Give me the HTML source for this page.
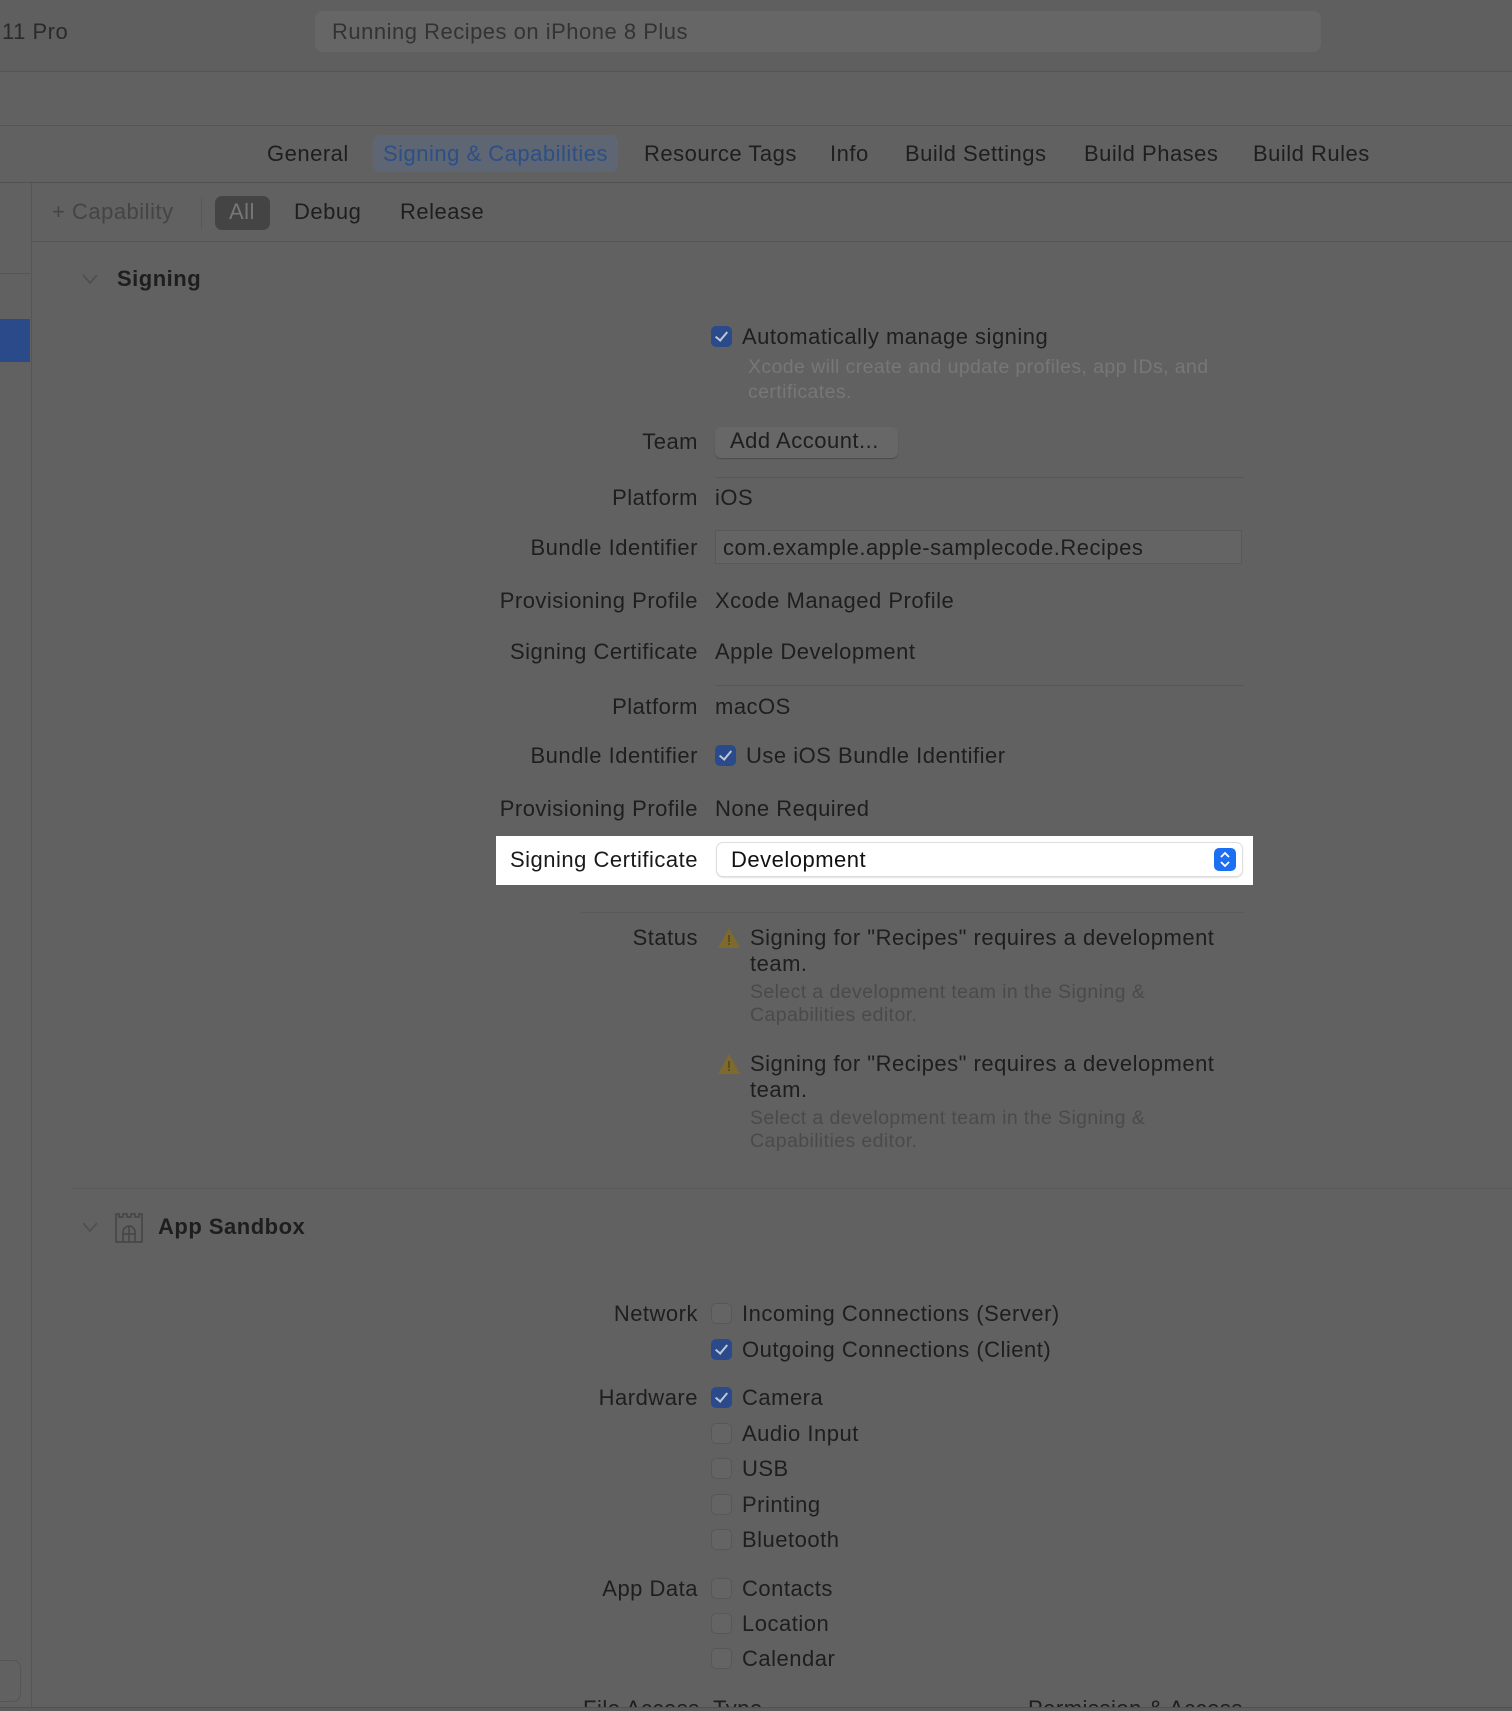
<!DOCTYPE html>
<html style="overflow:hidden"><head><meta charset="utf-8"><style>
body{margin:0;width:1512px;height:1711px;background:#616161;font-family:"Liberation Sans",sans-serif;color:#1e1e1e;position:relative;overflow:hidden}
.t{position:absolute;font-size:22px;letter-spacing:0.5px;line-height:26px;white-space:nowrap}
.l{position:absolute;right:814px;font-size:22px;letter-spacing:0.5px;line-height:26px;white-space:nowrap;text-align:right}
.hl{position:absolute;height:1px;background:#555}
.cb{position:absolute;left:711px;width:21px;height:21px;border-radius:5px;border:1px solid #575757;background:#646464;box-sizing:border-box}
.cb.on{background:#2b4a8c;border-color:#2b4a8c}
.cb.on:after{content:"";position:absolute;left:6px;top:2px;width:5px;height:10px;border:solid #bfc6d4;border-width:0 2.5px 2.5px 0;transform:rotate(40deg)}
.sub{position:absolute;font-size:19.5px;letter-spacing:0.4px;line-height:23px;color:#4a4a4a;white-space:nowrap}
</style></head><body>
<div style="position:absolute;left:0;top:0;width:1512px;height:71px;background:#5f5f5f;border-bottom:1px solid #555"></div>
<div class="t" style="left:2px;top:19px;color:#2a2a2a">11 Pro</div>
<div style="position:absolute;left:315px;top:11px;width:1006px;height:41px;border-radius:8px;background:#666"></div>
<div class="t" style="left:332px;top:19px;color:#333">Running Recipes on iPhone 8 Plus</div>
<div class="hl" style="left:0;top:125px;width:1512px"></div>
<div style="position:absolute;left:373px;top:135px;width:245px;height:37px;border-radius:7px;background:#5d6672"></div>
<div class="t" style="left:267px;top:141px">General</div>
<div class="t" style="left:383px;top:141px;color:#2d4f86">Signing &amp; Capabilities</div>
<div class="t" style="left:644px;top:141px">Resource Tags</div>
<div class="t" style="left:830px;top:141px">Info</div>
<div class="t" style="left:905px;top:141px">Build Settings</div>
<div class="t" style="left:1084px;top:141px">Build Phases</div>
<div class="t" style="left:1253px;top:141px">Build Rules</div>
<div class="hl" style="left:0;top:182px;width:1512px;background:#505050"></div>
<div style="position:absolute;left:31px;top:183px;width:1px;height:1528px;background:#555"></div>
<div style="position:absolute;left:0;top:319px;width:30px;height:43px;background:#2b4a8a"></div>
<div style="position:absolute;left:0;top:273px;width:30px;height:1px;background:#555"></div>
<div class="t" style="left:52px;top:199px;color:#444">+ Capability</div>
<div style="position:absolute;left:201px;top:198px;width:1px;height:32px;background:#585858"></div>
<div style="position:absolute;left:215px;top:196px;width:55px;height:34px;border-radius:7px;background:#444"></div>
<div class="t" style="left:229px;top:199px;color:#777">All</div>
<div class="t" style="left:294px;top:199px">Debug</div>
<div class="t" style="left:400px;top:199px">Release</div>
<div class="hl" style="left:32px;top:241px;width:1480px;background:#555"></div>
<svg style="position:absolute;left:81px;top:273px" width="18" height="12" fill="none" stroke="#505050" stroke-width="1.8"><path d="M2 2l7 8 7-8"/></svg>
<div class="t" style="left:117px;top:266px;font-weight:bold">Signing</div>

<div class="cb on" style="top:326px"></div>
<div class="t" style="left:742px;top:324px">Automatically manage signing</div>
<div class="sub" style="left:748px;top:356px;color:#777">Xcode will create and update profiles, app IDs, and</div>
<div class="sub" style="left:748px;top:381px;color:#777">certificates.</div>
<div class="l" style="top:429px">Team</div>
<div style="position:absolute;left:715px;top:427px;width:183px;height:31px;border-radius:6px;background:#676767;box-shadow:0 1px 1px #4a4a4a"></div>
<div class="t" style="left:730px;top:428px">Add Account...</div>
<div class="hl" style="left:715px;top:477px;width:529px;background:#575757"></div>
<div class="l" style="top:485px">Platform</div><div class="t" style="left:715px;top:485px">iOS</div>
<div class="l" style="top:535px">Bundle Identifier</div>
<div style="position:absolute;left:715px;top:530px;width:527px;height:34px;background:#646464;border:1px solid #585858;box-sizing:border-box"></div>
<div class="t" style="left:723px;top:535px">com.example.apple-samplecode.Recipes</div>
<div class="l" style="top:588px">Provisioning Profile</div><div class="t" style="left:715px;top:588px">Xcode Managed Profile</div>
<div class="l" style="top:639px">Signing Certificate</div><div class="t" style="left:715px;top:639px">Apple Development</div>
<div class="hl" style="left:715px;top:685px;width:529px;background:#575757"></div>
<div class="l" style="top:694px">Platform</div><div class="t" style="left:715px;top:694px">macOS</div>
<div class="l" style="top:743px">Bundle Identifier</div>
<div class="cb on" style="left:715px;top:745px"></div>
<div class="t" style="left:746px;top:743px">Use iOS Bundle Identifier</div>
<div class="l" style="top:796px">Provisioning Profile</div><div class="t" style="left:715px;top:796px">None Required</div>

<div style="position:absolute;left:496px;top:836px;width:757px;height:49px;background:#fff"></div>
<div class="l" style="top:847px;color:#1a1a1a">Signing Certificate</div>
<div style="position:absolute;left:717px;top:843px;width:525px;height:33px;border-radius:6px;background:#fff;box-shadow:0 0 0 1px #ddd,0 1px 2px #bbb"></div>
<div class="t" style="left:731px;top:847px;color:#111">Development</div>
<div style="position:absolute;left:1214px;top:848px;width:22px;height:23px;border-radius:5px;background:#1c6ef2"></div>
<svg style="position:absolute;left:1214px;top:848px" width="22" height="23" fill="none" stroke="#fff" stroke-width="1.8"><path d="M7 9l4-4 4 4M7 14l4 4 4-4"/></svg>

<div class="hl" style="left:581px;top:912px;width:663px;background:#5a5a5a"></div>
<div class="l" style="top:925px">Status</div>
<svg style="position:absolute;left:717px;top:927px" width="24" height="22"><path d="M12 1L23 21H1Z" fill="#7d6a2c"/><rect x="11" y="8" width="2" height="7" fill="#5a4d22"/><rect x="11" y="16" width="2" height="2" fill="#5a4d22"/></svg>
<div class="t" style="left:750px;top:925px">Signing for "Recipes" requires a development</div>
<div class="t" style="left:750px;top:951px">team.</div>
<div class="sub" style="left:750px;top:981px">Select a development team in the Signing &amp;</div>
<div class="sub" style="left:750px;top:1004px">Capabilities editor.</div>
<svg style="position:absolute;left:717px;top:1053px" width="24" height="22"><path d="M12 1L23 21H1Z" fill="#7d6a2c"/><rect x="11" y="8" width="2" height="7" fill="#5a4d22"/><rect x="11" y="16" width="2" height="2" fill="#5a4d22"/></svg>
<div class="t" style="left:750px;top:1051px">Signing for "Recipes" requires a development</div>
<div class="t" style="left:750px;top:1077px">team.</div>
<div class="sub" style="left:750px;top:1107px">Select a development team in the Signing &amp;</div>
<div class="sub" style="left:750px;top:1130px">Capabilities editor.</div>
<div class="hl" style="left:71px;top:1188px;width:1441px;background:#5a5a5a"></div>

<svg style="position:absolute;left:81px;top:1221px" width="18" height="12" fill="none" stroke="#505050" stroke-width="1.8"><path d="M2 2l7 8 7-8"/></svg>
<svg style="position:absolute;left:114px;top:1212px" width="30" height="32" fill="none" stroke="#444" stroke-width="1.5"><path d="M2 30V2h3v3h4V2h4v3h4V2h4v3h4V2h3v28z"/><path d="M9 30V20a6 6 0 0 1 12 0v10M9 22h12M15 14v16"/></svg>
<div class="t" style="left:158px;top:1214px;font-weight:bold">App Sandbox</div>

<div class="l" style="top:1301px">Network</div>
<div class="cb" style="top:1303px"></div><div class="t" style="left:742px;top:1301px">Incoming Connections (Server)</div>
<div class="cb on" style="top:1339px"></div><div class="t" style="left:742px;top:1337px">Outgoing Connections (Client)</div>
<div class="l" style="top:1385px">Hardware</div>
<div class="cb on" style="top:1387px"></div><div class="t" style="left:742px;top:1385px">Camera</div>
<div class="cb" style="top:1423px"></div><div class="t" style="left:742px;top:1421px">Audio Input</div>
<div class="cb" style="top:1458px"></div><div class="t" style="left:742px;top:1456px">USB</div>
<div class="cb" style="top:1494px"></div><div class="t" style="left:742px;top:1492px">Printing</div>
<div class="cb" style="top:1529px"></div><div class="t" style="left:742px;top:1527px">Bluetooth</div>
<div class="l" style="top:1576px">App Data</div>
<div class="cb" style="top:1578px"></div><div class="t" style="left:742px;top:1576px">Contacts</div>
<div class="cb" style="top:1613px"></div><div class="t" style="left:742px;top:1611px">Location</div>
<div class="cb" style="top:1648px"></div><div class="t" style="left:742px;top:1646px">Calendar</div>
<div style="position:absolute;left:-10px;top:1660px;width:29px;height:40px;border-radius:8px;border:1px solid #555"></div>
<div class="t" style="left:583px;top:1696px;clip-path:inset(0 0 15px 0)">File Access</div><div class="t" style="left:713px;top:1696px;clip-path:inset(0 0 15px 0)">Type</div><div class="t" style="left:1028px;top:1696px;clip-path:inset(0 0 15px 0)">Permission &amp; Access</div>
<div style="position:absolute;left:0;top:1707px;width:1512px;height:4px;background:#5c5c5c;border-top:1px solid #505050"></div>
</body></html>
